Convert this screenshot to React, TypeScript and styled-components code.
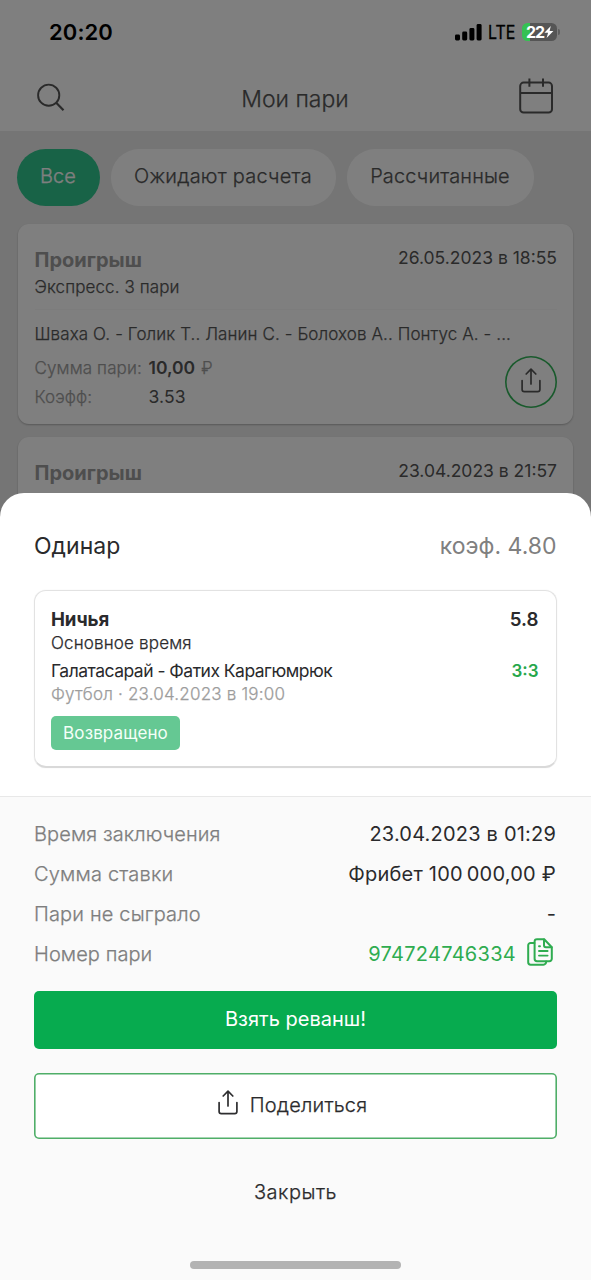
import React from 'react';
import styled, { createGlobalStyle } from 'styled-components';

const GlobalStyle = createGlobalStyle`
  * { box-sizing: border-box; }
  body { margin: 0; background: #fafafa; }
`;

const DIM_TEXT = '#555';
const DIM_LABEL = '#9c9c9c';

const Screen = styled.div`
  position: relative;
  width: 591px;
  height: 1280px;
  overflow: hidden;
  background: #ebebeb;
  font-family: Inter, 'Liberation Sans', sans-serif;
  color: #303030;
`;

const Text = styled.span<{
  $size: number;
  $weight?: number;
  $color?: string;
  $spacing?: number;
  $line?: number;
}>`
  display: block;
  white-space: pre;
  font-size: ${(p) => p.$size}px;
  font-weight: ${(p) => p.$weight ?? 300};
  -webkit-text-stroke: ${(p) => (p.$weight ? 0 : 0.25)}px currentColor;
  color: ${(p) => p.$color ?? '#2a2a2c'};
  letter-spacing: ${(p) => p.$spacing ?? 0}px;
  line-height: ${(p) => p.$line ?? 24}px;
`;

const StatusBar = styled.header`
  position: absolute;
  z-index: 3;
  inset: 0 0 auto 0;
  height: 65px;
  padding: 0 34px 1px 49px;
  display: flex;
  align-items: center;
  justify-content: space-between;
  color: #000;
`;

const StatusIcons = styled.div`
  display: flex;
  align-items: center;
`;

const Network = styled.span`
  width: 27px;
  margin-left: 6px;
  font-size: 18.5px;
  line-height: 20px;
  font-weight: 400;
  -webkit-text-stroke: 0.3px currentColor;
  transform: scaleX(0.86);
  transform-origin: left;
`;

const Battery = styled.div`
  position: relative;
  display: flex;
  align-items: center;
  width: 35px;
  height: 18px;
  margin-left: 7px;
  padding-left: 4px;
  border-radius: 5.5px;
  background: linear-gradient(to right, #35c152 8px, #555 8px);
  color: #fff;
  font-size: 16px;
  line-height: 18px;
  font-weight: 700;
  letter-spacing: -1px;

  &::after {
    content: '';
    position: absolute;
    left: 36px;
    top: 6px;
    width: 2px;
    height: 6px;
    border-radius: 0 2px 2px 0;
    background: #5e5e5e;
  }
`;

const NavBar = styled.nav`
  height: 131px;
  padding: 67px 37px 0 36px;
  display: flex;
  align-items: center;
  justify-content: space-between;
  background: #fff;

  > svg {
    margin-bottom: 3px;
  }
`;

const NavTitle = styled.h1`
  margin: 0;
  padding-left: 5px;
  font-size: 23px;
  line-height: 28px;
  font-weight: 300;
  -webkit-text-stroke: 0.25px currentColor;
  color: ${DIM_TEXT};
`;

const Filters = styled.div`
  display: flex;
  gap: 11px;
  padding: 18px 17px;
`;

const Chip = styled.button<{ $width: number; $active?: boolean }>`
  width: ${(p) => p.$width}px;
  height: 57px;
  padding: 0 1px 3px 0;
  display: flex;
  align-items: center;
  justify-content: center;
  border: 0;
  border-radius: 29px;
  font-family: inherit;
  background: ${(p) => (p.$active ? '#30c68e' : '#fff')};
`;

const BetList = styled.main`
  display: flex;
  flex-direction: column;
  gap: 13px;
  padding: 0 18px;
`;

const BetCard = styled.article`
  height: 200px;
  padding: 22px 16px 0 16.5px;
  border-radius: 11px;
  background: #fff;
  box-shadow: 0 1px 2px rgba(0, 0, 0, 0.25);
`;

const BetHead = styled.div`
  display: flex;
  justify-content: space-between;
`;

const BetTitle = styled.div`
  padding-top: 2px;
`;

const Rule = styled.div`
  height: 1px;
  margin-top: 7px;
  background: #f8f8f8;
`;

const BetFoot = styled.div`
  display: flex;
  justify-content: space-between;
  margin-top: -2px;
`;

const Facts = styled.div`
  display: grid;
  grid-template-columns: 114px auto;
  grid-auto-rows: 28.5px;
  align-items: center;
  height: 57px;
  margin-top: -2px;
`;

const Amount = styled.div`
  display: flex;
  gap: 6px;
`;

const ShareRound = styled.button`
  width: 52px;
  height: 52px;
  padding: 0 0 4px;
  display: flex;
  align-items: center;
  justify-content: center;
  border: 0;
  border-radius: 50%;
  box-shadow: inset 0 0 0 1.6px #33b459;
  background: transparent;
`;

const Shade = styled.div`
  position: absolute;
  z-index: 1;
  inset: 0;
  background: rgba(0, 0, 0, 0.5);
`;

const Sheet = styled.section`
  position: absolute;
  z-index: 2;
  inset: 493px 0 0 0;
  border-radius: 24px 24px 0 0;
  background: #fff;
  overflow: hidden;
`;

const SheetTop = styled.div`
  height: 303px;
  padding: 39px 34px 0;
`;

const SheetHead = styled.div`
  display: flex;
  justify-content: space-between;
  padding-right: 0.5px;
`;

const EventCard = styled.article`
  height: 178px;
  margin-top: 29px;
  padding: 17px 17.5px 0 16px;
  border: 1px solid #e2e2e2;
  border-bottom: 2px solid #d9d9d9;
  border-radius: 12px;
  box-shadow: 0 0 1px rgba(0, 0, 0, 0.15);
`;

const Row = styled.div<{ $top?: number }>`
  display: flex;
  justify-content: space-between;
  align-items: center;
  margin-top: ${(p) => p.$top ?? 0}px;
`;

const Badge = styled.div`
  display: flex;
  align-items: center;
  justify-content: center;
  width: 129px;
  height: 34px;
  margin-top: 10px;
  border-radius: 5px;
  background: #65c893;
`;

const SheetBody = styled.div`
  height: 484px;
  padding: 17px 34px 0;
  border-top: 1px solid #e8e8e8;
  background: #fafafa;
`;

const DetailRow = styled(Row)`
  height: 40px;
  padding-right: 1px;
`;

const BetNumber = styled.div`
  display: flex;
  align-items: center;
  gap: 11px;
  padding-right: 3px;

  > svg {
    margin-bottom: 4px;
  }
`;

const PrimaryButton = styled.button`
  display: flex;
  align-items: center;
  justify-content: center;
  width: 100%;
  height: 58px;
  margin-top: 17px;
  padding: 0 0 2px;
  border: 0;
  border-radius: 5px;
  background: #07ab4f;
  font-family: inherit;
`;

const OutlineButton = styled(PrimaryButton)`
  gap: 12px;
  height: 66px;
  margin-top: 24px;
  padding: 0 6px 3px 0;
  box-shadow: inset 0 0 0 1.6px #4fae68;
  background: #fff;

  > svg {
    margin-bottom: 4px;
  }
`;

const CloseButton = styled(PrimaryButton)`
  height: 60px;
  margin-top: 24px;
  background: transparent;
`;

const HomeIndicator = styled.div`
  width: 211px;
  height: 8px;
  margin: 38px auto 0;
  border-radius: 4px;
  background: #b3b3b3;
`;

const SignalIcon = () => (
  <svg width="27" height="17" viewBox="0 0 27 17" fill="#000">
    <rect x="0" y="10.5" width="5" height="6" rx="1.4" />
    <rect x="7.2" y="7.5" width="5" height="9" rx="1.4" />
    <rect x="14.4" y="4" width="5" height="12.5" rx="1.4" />
    <rect x="21.6" y="0" width="5" height="16.5" rx="1.4" />
  </svg>
);

const BoltIcon = () => (
  <svg width="10" height="12" viewBox="0 0 10 12" fill="#fff">
    <path d="M6.8 0 0.4 6.8h3.7L2.6 12 9.4 4.9H5.6z" />
  </svg>
);

const SearchIcon = () => (
  <svg width="30" height="30" viewBox="0 0 30 30" fill="none" stroke={DIM_TEXT} strokeWidth="1.9">
    <circle cx="12.7" cy="12.2" r="10.6" />
    <path d="M20.2 19.8 27.5 27.2" strokeWidth="2.2" />
  </svg>
);

const CalendarIcon = () => (
  <svg width="35" height="40" viewBox="0 0 35 40" fill="none" stroke={DIM_TEXT} strokeWidth="2">
    <rect x="1.2" y="4.6" width="31.8" height="30" rx="3.4" />
    <path d="M1.2 15H33M10.4 0.4v8.4M24 0.4v8.4" />
  </svg>
);

const ShareIcon = ({ color = '#2e2e30' }: { color?: string }) => (
  <svg
    width="20"
    height="25"
    viewBox="0 0 20 25"
    fill="none"
    stroke={color}
    strokeWidth="1.7"
    strokeLinecap="round"
    strokeLinejoin="round"
  >
    <path d="M1.1 12.6v8.9a2.2 2.2 0 0 0 2.2 2.2h13.4a2.2 2.2 0 0 0 2.2-2.2v-8.9" />
    <path d="M10 16V1.6M5.2 6 10 1.2 14.8 6" />
  </svg>
);

const CopyIcon = () => (
  <svg
    width="26"
    height="28"
    viewBox="0 0 26 28"
    fill="none"
    stroke="#2fac50"
    strokeWidth="2"
    strokeLinecap="round"
    strokeLinejoin="round"
  >
    <path d="M10 1.2h7.2l7.6 8v11.6a2.4 2.4 0 0 1-2.4 2.4H10a2.4 2.4 0 0 1-2.4-2.4V3.6A2.4 2.4 0 0 1 10 1.2z" />
    <path d="M17 1.4v5.9a1.9 1.9 0 0 0 1.9 1.9h5.7" />
    <path d="M7.4 4.9H3.6a2.4 2.4 0 0 0-2.4 2.4v17a2.4 2.4 0 0 0 2.4 2.4h12.8a2.8 2.8 0 0 0 2.7-3.3" />
    <path d="M12 8.3h1M12 13h8.6M12 17.6h8.6" strokeWidth="1.9" />
  </svg>
);

const App = () => (
  <Screen>
    <GlobalStyle />

    <StatusBar>
      <Text $size={22} $weight={600} $color="#000" $spacing={0.1}>20:20</Text>
      <StatusIcons>
        <SignalIcon />
        <Network>LTE</Network>
        <Battery>
          22
          <BoltIcon />
        </Battery>
      </StatusIcons>
    </StatusBar>

    <NavBar>
      <SearchIcon />
      <NavTitle>Мои пари</NavTitle>
      <CalendarIcon />
    </NavBar>

    <Filters>
      <Chip $width={83} $active>
        <Text $size={20} $spacing={0.1} $color="#fff">Все</Text>
      </Chip>
      <Chip $width={225}>
        <Text $size={20} $spacing={0.24} $color={DIM_TEXT}>Ожидают расчета</Text>
      </Chip>
      <Chip $width={187}>
        <Text $size={20} $spacing={0.14} $color={DIM_TEXT}>Рассчитанные</Text>
      </Chip>
    </Filters>

    <BetList>
      <BetCard>
        <BetHead>
          <BetTitle>
            <Text $size={20} $weight={700} $color={DIM_LABEL}>Проигрыш</Text>
            <Text $size={17} $spacing={0.1} $line={30} $color={DIM_TEXT}>Экспресс. 3 пари</Text>
          </BetTitle>
          <Text $size={17.5} $weight={400} $color={DIM_TEXT}>26.05.2023 в 18:55</Text>
        </BetHead>
        <Rule />
        <Text $size={17} $spacing={0.1} $line={48} $color={DIM_TEXT}>
          Шваха О. - Голик Т.. Ланин С. - Болохов А.. Понтус А. - ...
        </Text>
        <BetFoot>
          <Facts>
            <Text $size={17} $spacing={0.12} $color={DIM_LABEL}>Сумма пари:</Text>
            <Amount>
              <Text $size={17.5} $weight={600} $color={DIM_TEXT}>10,00</Text>
              <Text $size={17} $color={DIM_LABEL}>₽</Text>
            </Amount>
            <Text $size={17} $spacing={0.1} $color={DIM_LABEL}>Коэфф:</Text>
            <Text $size={17.5} $weight={400} $spacing={0.15} $color={DIM_TEXT}>3.53</Text>
          </Facts>
          <ShareRound>
            <ShareIcon color={DIM_TEXT} />
          </ShareRound>
        </BetFoot>
      </BetCard>

      <BetCard>
        <BetHead>
          <BetTitle>
            <Text $size={20} $weight={700} $color={DIM_LABEL}>Проигрыш</Text>
          </BetTitle>
          <Text $size={17.5} $weight={400} $color={DIM_TEXT}>23.04.2023 в 21:57</Text>
        </BetHead>
      </BetCard>
    </BetList>

    <Shade />

    <Sheet>
      <SheetTop>
        <SheetHead>
          <Text $size={23} $weight={400} $line={29}>Одинар</Text>
          <Text $size={23} $weight={400} $line={29} $color="#808080">коэф. 4.80</Text>
        </SheetHead>
        <EventCard>
          <Row>
            <Text $size={18.7} $weight={700} $spacing={-0.1}>Ничья</Text>
            <Text $size={18.7} $weight={600}>5.8</Text>
          </Row>
          <Text $size={17} $spacing={0.17} $line={22}>Основное время</Text>
          <Row $top={5}>
            <Text $size={17.5} $weight={400} $spacing={-0.51}>Галатасарай - Фатих Карагюмрюк</Text>
            <Text $size={17} $weight={600} $color="#27a74b">3:3</Text>
          </Row>
          <Text $size={17} $spacing={0.2} $line={23} $color="#9c9c9c">
            Футбол · 23.04.2023 в 19:00
          </Text>
          <Badge>
            <Text $size={17} $weight={400} $spacing={0.11} $color="#f4fff8">Возвращено</Text>
          </Badge>
        </EventCard>
      </SheetTop>

      <SheetBody>
        <DetailRow>
          <Text $size={20} $spacing={0.1} $color="#7e7e7e">Время заключения</Text>
          <Text $size={20} $weight={400} $spacing={0.2}>23.04.2023 в 01:29</Text>
        </DetailRow>
        <DetailRow>
          <Text $size={20} $spacing={0.18} $color="#7e7e7e">Сумма ставки</Text>
          <Text $size={20} $weight={400} $spacing={0.22}>{'Фрибет 100\u2009000,00 ₽'}</Text>
        </DetailRow>
        <DetailRow>
          <Text $size={20} $spacing={0.16} $color="#7e7e7e">Пари не сыграло</Text>
          <Text $size={20} $weight={400}>-</Text>
        </DetailRow>
        <DetailRow>
          <Text $size={20} $spacing={0.08} $color="#7e7e7e">Номер пари</Text>
          <BetNumber>
            <Text $size={20} $weight={400} $spacing={0.28} $color="#2fac50">974724746334</Text>
            <CopyIcon />
          </BetNumber>
        </DetailRow>
        <PrimaryButton>
          <Text $size={20} $weight={400} $color="#fff">Взять реванш!</Text>
        </PrimaryButton>
        <OutlineButton>
          <ShareIcon />
          <Text $size={20} $spacing={0.18}>Поделиться</Text>
        </OutlineButton>
        <CloseButton>
          <Text $size={20} $spacing={0.5}>Закрыть</Text>
        </CloseButton>
        <HomeIndicator />
      </SheetBody>
    </Sheet>
  </Screen>
);

export default App;
